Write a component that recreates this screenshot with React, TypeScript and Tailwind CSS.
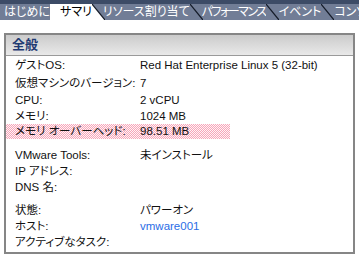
import React from 'react';

const tabs = [
  { name: 'はじめに', pl: 'pl-[4px]' },
  { name: 'サマリ', pl: 'pl-[10px]', active: true },
  { name: 'リソース割り当て', pl: 'pl-[11px]' },
  { name: 'パフォーマンス', pl: 'pl-[12px] tracking-[-1.5px]' },
  { name: 'イベント', pl: 'pl-[13px]' },
  { name: 'コンソール', pl: 'pl-[13px]' },
];

type Row = { label: string; value?: string; h: string; link?: boolean; hl?: boolean };

const groups: { rows: Row[]; mt: string }[] = [
  {
    mt: 'mt-px',
    rows: [
      { label: 'ゲストOS:', value: 'Red Hat Enterprise Linux 5 (32-bit)', h: 'h-[18px]' },
      { label: '仮想マシンのバージョン:', value: '7', h: 'h-[18px]' },
      { label: 'CPU:', value: '2 vCPU', h: 'h-4' },
      { label: 'メモリ:', value: '1024 MB', h: 'h-[15px]' },
      { label: 'メモリ オーバーヘッド:', value: '98.51 MB', h: 'h-[15px]', hl: true },
    ],
  },
  {
    mt: 'mt-[9px]',
    rows: [
      { label: 'VMware Tools:', value: '未インストール', h: 'h-4' },
      { label: 'IP アドレス:', h: 'h-4' },
      { label: 'DNS 名:', h: 'h-4' },
    ],
  },
  {
    mt: 'mt-[7px]',
    rows: [
      { label: '状態:', value: 'パワーオン', h: 'h-4' },
      { label: 'ホスト:', value: 'vmware001', h: 'h-4', link: true },
      { label: 'アクティブなタスク:', h: 'h-4' },
    ],
  },
];

function Tab({ name, pl, active, first, z }: { name: string; pl: string; active?: boolean; first?: boolean; z: number }) {
  const fill = active ? '#ffffff' : '#717d96';
  return (
    <div className={`relative flex h-4 shrink-0 ${first ? '' : '-ml-[13px]'}`} style={{ zIndex: z }}>
      <div
        className={`flex items-center leading-none text-[12px] whitespace-nowrap ${pl} ${
          active ? 'bg-white text-black' : 'bg-[#717d96] text-white'
        }`}
      >
        {name}
      </div>
      <svg width="13" height="16" viewBox="0 0 13 16" className="block shrink-0">
        <polygon points="0,0 13,16 0,16" fill={fill} />
        <line x1="0" y1="0" x2="13" y2="16" stroke="#141b28" strokeWidth="1.2" />
      </svg>
    </div>
  );
}

export default function App() {
  return (
    <div
      className="w-[359px] h-[260px] bg-white overflow-hidden [font-feature-settings:'palt']"
      style={{ fontFamily: '"Liberation Sans", "Noto Sans CJK JP", sans-serif' }}
    >
      <div className="bg-[#3c4b66] pt-1 flex overflow-hidden">
        {tabs.map((t, i) => (
          <Tab key={t.name} name={t.name} pl={t.pl} active={t.active} first={i === 0} z={t.active ? 50 : 40 - i} />
        ))}
      </div>

      <div className="mx-1 mt-[13px] h-[221px] border-2 border-[#868686]">
        <div className="h-[21px] flex items-center px-[6px] bg-gradient-to-b from-[#cbcbcb] to-[#e9e9e9] border-b border-[#9a9a9a]">
          <span className="text-[13px] font-bold text-[#1f3a73]">全般</span>
        </div>
        {groups.map((g, gi) => (
          <div key={gi} className={g.mt}>
            {g.rows.map((r) => (
              <div
                key={r.label}
                className={`flex items-center text-[11.5px] text-[#111] ${r.h} ${
                  r.hl
                    ? 'mr-[123px] bg-[repeating-conic-gradient(#f6a6b9_0_25%,#fff3f6_0_50%)] bg-[length:2px_2px]'
                    : ''
                }`}
              >
                <span className="w-[134px] pl-[9px] shrink-0 whitespace-nowrap">{r.label}</span>
                {r.value && (
                  <span className={`whitespace-nowrap ${r.link ? 'text-[#2a6de6]' : ''}`}>{r.value}</span>
                )}
              </div>
            ))}
          </div>
        ))}
      </div>
    </div>
  );
}
